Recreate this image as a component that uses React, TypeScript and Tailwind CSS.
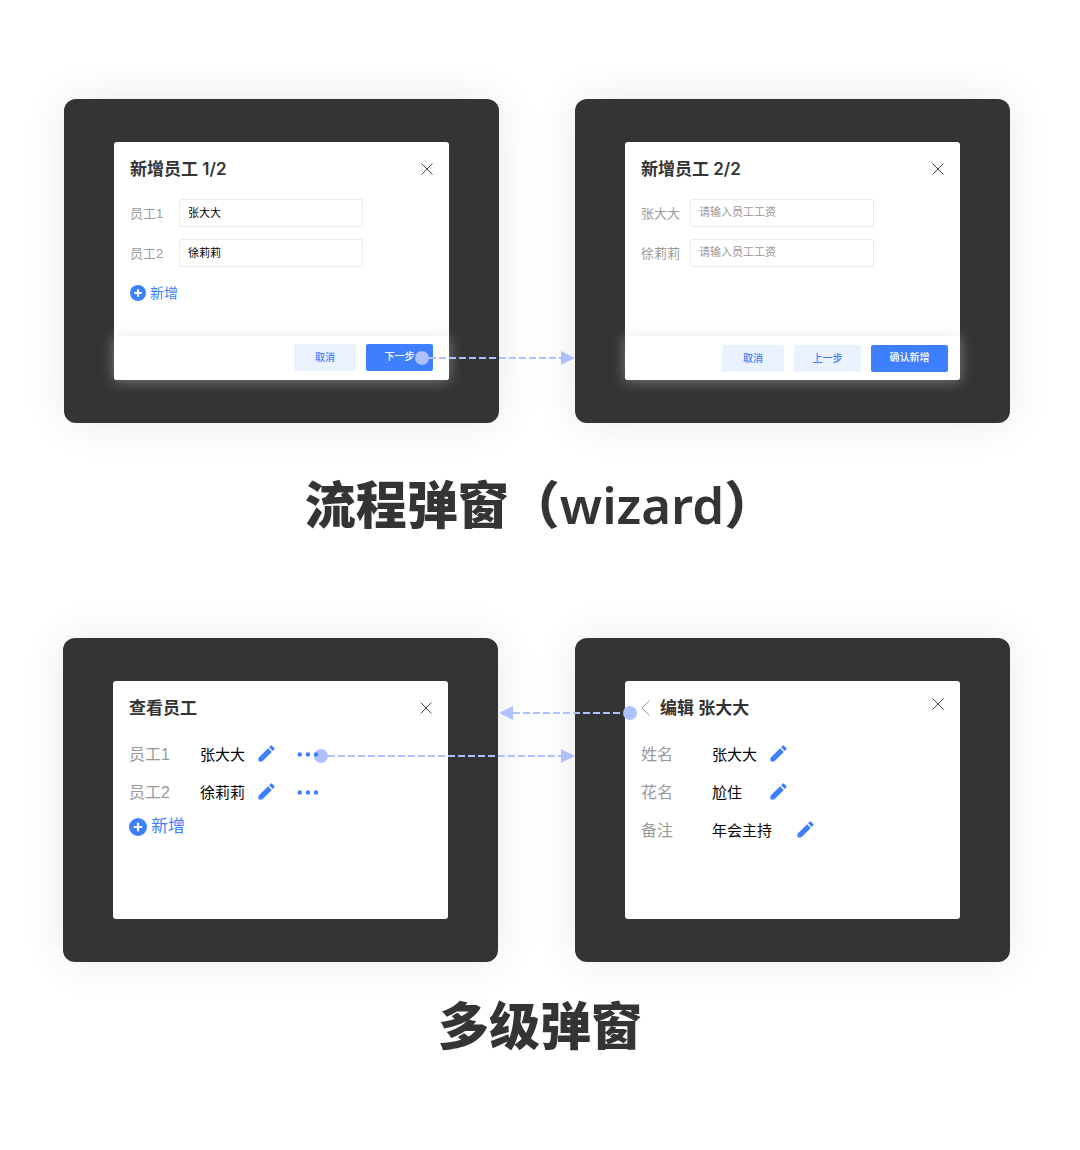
import type { ReactNode } from "react";

const PencilIcon = () => (
  <svg viewBox="0 0 17 17" className="size-[17px]" fill="#3d7fff" aria-hidden="true">
    <path d="M10.100 3.200 13.800 6.900 4.700 16Q4.100 16.600 3.300 16.600H1.200Q.4 16.600.4 15.800V13.800Q.4 12.900 1 12.300Z" />
    <path d="m11.100 2.200 1.500-1.500q.7-.7 1.400 0l2.300 2.300q.7.7 0 1.400l-1.500 1.500z" />
  </svg>
);

const DotsIcon = () => (
  <svg viewBox="0 0 22 5" className="h-[5px] w-[22px]" fill="#3d7fff" aria-hidden="true">
    <circle cx="2.800" cy="2.500" r="2.200" />
    <circle cx="10.900" cy="2.500" r="2.200" />
    <circle cx="19" cy="2.500" r="2.200" />
  </svg>
);

const PlusIcon = ({ className }: { className: string }) => (
  <svg viewBox="0 0 18 18" className={className} aria-hidden="true">
    <circle cx="9" cy="9" r="9" fill="#3d7fff" />
    <path d="M9 4.800v8.400M4.800 9h8.400" stroke="#fff" strokeWidth="2.200" />
  </svg>
);

const CloseButton = ({ className = "" }: { className?: string }) => (
  <button type="button" aria-label="关闭" className={className}>
    <svg viewBox="0 0 12 12" className="size-3" stroke="#444" strokeWidth="1" fill="none">
      <path d="m.5.5 11 11M11.500.5l-11 11" />
    </svg>
  </button>
);

const ArrowHead = ({ flip = false }: { flip?: boolean }) => (
  <svg viewBox="0 0 14 14" className="size-3.5 shrink-0" fill="#afc0ff" aria-hidden="true">
    <path d={flip ? "M14 0v14L0 7z" : "M0 0v14l14-7z"} />
  </svg>
);

const DashLine = () => (
  <svg className="h-0.5 min-w-0 flex-1" aria-hidden="true">
    <line x1="0" y1="1" x2="100%" y2="1" stroke="#afc0ff" strokeWidth="2" strokeDasharray="7 3" />
  </svg>
);

const Connector = ({ className, reverse = false }: { className: string; reverse?: boolean }) => (
  <div className={"pointer-events-none absolute z-10 flex items-center " + className}>
    {reverse ? <ArrowHead flip /> : <span className="size-3.5 shrink-0 rounded-full bg-[#afc0ff]" />}
    <DashLine />
    {reverse ? <span className="size-3.5 shrink-0 rounded-full bg-[#afc0ff]" /> : <ArrowHead />}
  </div>
);

const Screen = ({ children, connector }: { children: ReactNode; connector?: ReactNode }) => (
  <div className="relative grid rounded-xl bg-[#343434] px-[50px] py-[43px] shadow-[0_0_44px_rgba(0,0,0,0.09)]">
    <section className="flex min-h-[238px] flex-col rounded-[3px] bg-white">{children}</section>
    {connector}
  </div>
);

const Title = ({ children }: { children: ReactNode }) => (
  <h3 className="font-['Inter','Noto_Sans_CJK_SC',sans-serif] text-[17px] leading-6 font-semibold text-[#343434]">
    {children}
  </h3>
);

const Field = ({ id, label, value, placeholder }: { id: string; label: string; value?: string; placeholder?: string }) => (
  <div className="flex items-center">
    <label htmlFor={id} className="w-[49px] pt-0.5 text-[13px] leading-5 text-[#999]">
      {label}
    </label>
    <input
      id={id}
      type="text"
      defaultValue={value}
      placeholder={placeholder}
      className="h-7 w-[184px] rounded-[2px] border border-[#ebebeb] bg-white px-2 pb-0.5 text-[11px] text-black outline-none placeholder:text-[#999]"
    />
  </div>
);

const Footer = ({ children, className }: { children: ReactNode; className: string }) => (
  <footer
    className={
      "mt-auto flex h-11 items-center justify-end gap-2.5 rounded-b-[3px] bg-white shadow-[0_1px_14px_rgba(204,204,204,0.5)] " +
      className
    }
  >
    {children}
  </footer>
);

const softButton = "h-[27px] rounded-[2px] bg-[#eaf2ff] text-[10px] font-medium text-[#3d7fff]";
const mainButton = "h-[27px] rounded-[2px] bg-[#3d7fff] pb-0.5 text-[10px] font-medium text-white";

const Row = ({ label, value, wide = false, more = false }: { label: string; value: string; wide?: boolean; more?: boolean }) => (
  <div className="flex h-[38px] items-center">
    <dt className="w-[71px] text-base leading-6 text-[#999]">{label}</dt>
    <dd className="flex items-center text-[15px] leading-6 text-black">
      <span className={wide ? "w-[85px]" : "w-[58px]"}>{value}</span>
      <button type="button" aria-label={"编辑" + value} className="mb-1">
        <PencilIcon />
      </button>
      {more && (
        <button type="button" aria-label={"更多" + value} className="relative z-20 mb-0.5 ml-[22px]">
          <DotsIcon />
        </button>
      )}
    </dd>
  </div>
);

const Caption = ({ children, className }: { children: ReactNode; className: string }) => (
  <h2 className={"text-center text-[51px] leading-[60px] font-black text-[#343434] " + className}>{children}</h2>
);

export default function App() {
  return (
    <main className="min-h-screen bg-white pt-[99px] pb-24 font-['Liberation_Sans','Noto_Sans_CJK_SC',sans-serif]">
      <div className="grid grid-cols-2 gap-[76px] pr-[70px] pl-16">
        <Screen connector={<Connector className="top-[252px] right-[-76px] w-[160px]" />}>
          <header className="flex items-center justify-between px-4 pt-[15px]">
            <Title>新增员工 1/2</Title>
            <CloseButton />
          </header>
          <form className="flex flex-col gap-3 px-4 pt-[18px]">
            <Field id="employee-1" label="员工1" value="张大大" />
            <Field id="employee-2" label="员工2" value="徐莉莉" />
          </form>
          <button type="button" className="mx-4 mt-4 mb-8 flex items-center gap-1 self-start text-[14px] leading-5 text-[#3d7fff]">
            <PlusIcon className="size-4" />
            新增
          </button>
          <Footer className="pr-4 pb-0.5">
            <button type="button" className={softButton + " w-[62px]"}>取消</button>
            <button type="button" className={mainButton + " w-[67px]"}>下一步</button>
          </Footer>
        </Screen>
        <Screen>
          <header className="flex items-center justify-between px-4 pt-[15px]">
            <Title>新增员工 2/2</Title>
            <CloseButton />
          </header>
          <form className="flex flex-col gap-3 px-4 pt-[18px]">
            <Field id="salary-1" label="张大大" placeholder="请输入员工工资" />
            <Field id="salary-2" label="徐莉莉" placeholder="请输入员工工资" />
          </form>
          <Footer className="pr-3">
            <button type="button" className={softButton + " w-[62px]"}>取消</button>
            <button type="button" className={softButton + " w-[67px]"}>上一步</button>
            <button type="button" className={mainButton + " w-[77px]"}>确认新增</button>
          </Footer>
        </Screen>
      </div>
      <Caption className="mt-[51px]">
        流程弹窗（<span className="font-['Noto_Sans'] font-semibold">wizard</span>）
      </Caption>

      <div className="mt-[101px] grid grid-cols-2 gap-[77px] pr-[70px] pl-[63px]">
        <Screen connector={<Connector className="top-[111px] right-[-77px] left-[251px]" />}>
          <header className="flex items-center justify-between px-4 pt-[15px]">
            <Title>查看员工</Title>
            <CloseButton />
          </header>
          <dl className="px-4 pt-4">
            <Row label="员工1" value="张大大" more />
            <Row label="员工2" value="徐莉莉" more />
          </dl>
          <button type="button" className="mx-4 mt-[3px] flex items-center gap-1 self-start text-[17px] leading-6 text-[#3d7fff]">
            <PlusIcon className="size-[18px]" />
            新增
          </button>
        </Screen>
        <Screen connector={<Connector reverse className="top-[68px] left-[-76px] w-[138px]" />}>
          <header className="flex items-center px-4 pt-[15px]">
            <button type="button" aria-label="返回" className="mr-2.5">
              <svg viewBox="0 0 9 16" className="h-4 w-[9px]" stroke="#999" fill="none">
                <path d="M8.500.5.8 8l7.700 7.500" />
              </svg>
            </button>
            <Title>编辑 张大大</Title>
            <CloseButton className="mb-2 ml-auto" />
          </header>
          <dl className="px-4 pt-4">
            <Row label="姓名" value="张大大" />
            <Row label="花名" value="尬住" />
            <Row label="备注" value="年会主持" wide />
          </dl>
        </Screen>
      </div>
      <Caption className="mt-9">多级弹窗</Caption>
    </main>
  );
}
